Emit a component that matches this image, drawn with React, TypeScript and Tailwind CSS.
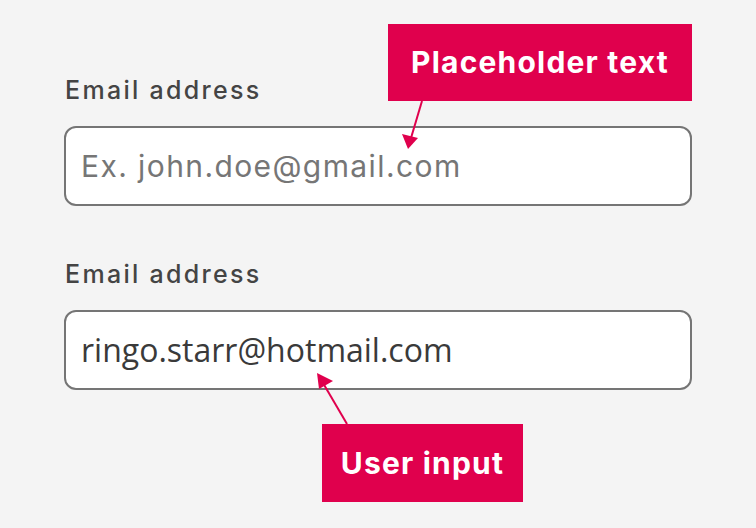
export default function App() {
  return (
    <div className="relative h-[528px] w-[756px] overflow-hidden bg-[#f4f4f4] font-['Inter',sans-serif]">
      <div className="flex flex-col pl-[64px] pt-[76px] w-[692px]">
        <label className="pl-[1px] text-[25px] leading-[28px] font-medium text-[#444444] tracking-[2.3px]">
          Email address
        </label>
        <div className="mt-[22px] flex h-[80px] items-center rounded-[12px] border-2 border-[#757575] bg-white px-[15px]">
          <span className="text-[30px] text-[#767676] tracking-[1.4px]">Ex. john.doe@gmail.com</span>
        </div>
        <label className="mt-[54px] pl-[1px] text-[25px] leading-[28px] font-medium text-[#444444] tracking-[2.3px]">
          Email address
        </label>
        <div className="mt-[22px] flex h-[80px] items-center rounded-[12px] border-2 border-[#757575] bg-white px-[15px]">
          <span className="font-['Open_Sans',sans-serif] text-[32px] text-[#3a3a3a]">ringo.starr@hotmail.com</span>
        </div>
      </div>

      <div className="absolute left-[388px] top-[24px] flex h-[77px] w-[304px] items-center justify-center bg-[#e0004d]">
        <span className="text-[30px] font-bold text-white tracking-[1.2px]">Placeholder text</span>
      </div>
      <div className="absolute left-[322px] top-[424px] flex h-[78px] w-[201px] items-center justify-center bg-[#e0004d]">
        <span className="text-[30px] font-bold text-white tracking-[1.2px]">User input</span>
      </div>

      <svg className="absolute left-0 top-0" width="756" height="528">
        <line x1="422" y1="101" x2="411" y2="138" stroke="#e0004d" strokeWidth="2" />
        <polygon points="408,149 402,134 418,138" fill="#e0004d" />
        <line x1="347" y1="424" x2="323" y2="383" stroke="#e0004d" strokeWidth="2" />
        <polygon points="317,373 333,381 319,389" fill="#e0004d" />
      </svg>
    </div>
  );
}
